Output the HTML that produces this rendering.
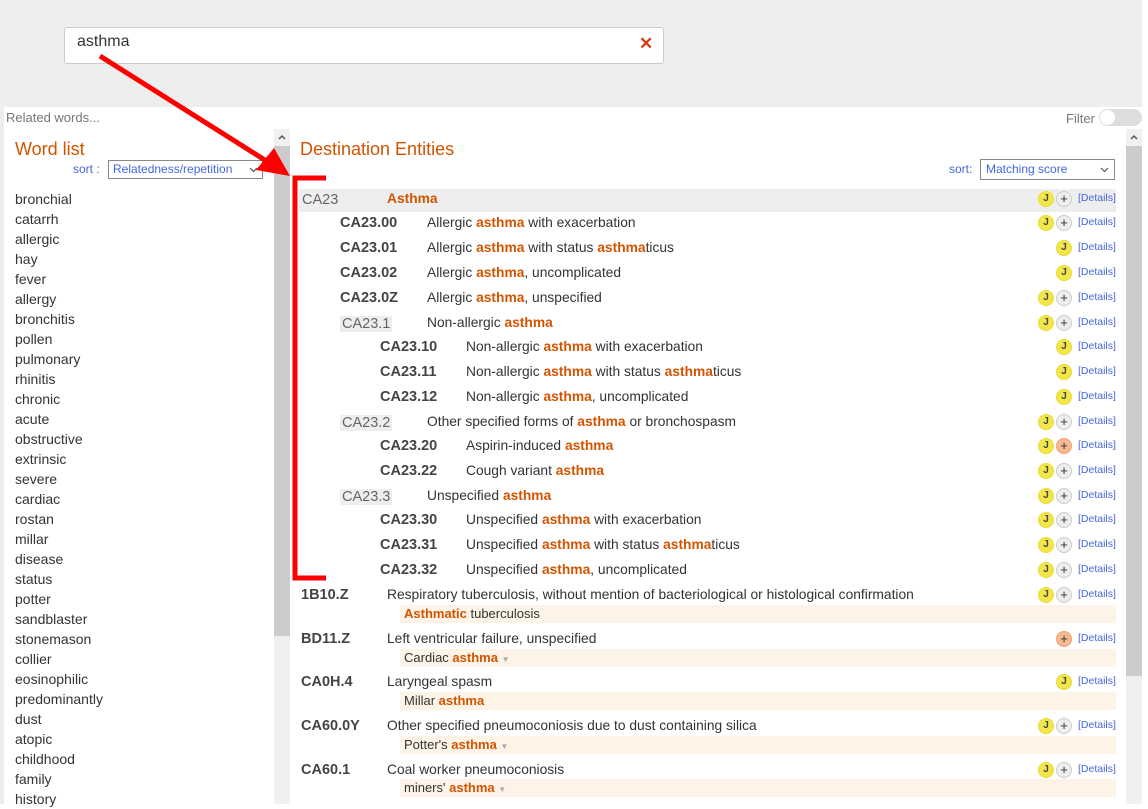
<!DOCTYPE html>
<html><head><meta charset="utf-8"><style>
*{margin:0;padding:0;box-sizing:border-box}
body{width:1148px;height:804px;overflow:hidden;background:#fff;font-family:"Liberation Sans",sans-serif;color:#333;position:relative}
.a{position:absolute;white-space:nowrap}
.top{left:0;top:0;width:1148px;height:107px;background:#eee}
.search{left:64px;top:27px;width:600px;height:37px;background:#fff;border:1px solid #ccc;border-radius:3px}
.wl{font-size:14px;left:15px;line-height:20px}
.r{height:20px;line-height:20px}
.code{font-weight:bold;color:#444;font-size:14.5px}
.cat{background:#eee;color:#666;padding:0 2px;font-size:14.5px}
.t{font-size:13.8px;color:#333}
b.o{color:#d35400}
.sub{background:#fdf3e6;height:18px;line-height:18px;left:400px;width:716px;padding-left:4px;font-size:13px}
.ic{width:16px;height:16px;border-radius:50%;font-size:10px;line-height:14px;text-align:center;font-weight:bold}
.j{background:#f2e64a;border:1px solid #e8dc30;color:#444}
.p{background:#eee;border:1px solid #ccc;color:#333;font-size:13px;font-weight:normal}
.po{background:#f7b993;border:1px solid #f0a070;color:#333;font-size:13px;font-weight:normal}
.d{font-size:10.5px;color:#4466dd;left:1078px}
.tri{color:#aaa;font-size:8px}
</style></head><body>
<div class="a top"></div>
<div class="a search"></div>
<div class="a" style="left:77px;top:33px;font-size:16px;color:#333">asthma</div>
<div class="a" style="left:639px;top:34px;font-size:17px;color:#d63c1c;font-weight:bold">✕</div>
<div class="a" style="left:0;top:107px;width:4px;height:697px;background:#eee"></div>
<div class="a" style="left:1142px;top:0;width:6px;height:804px;background:#fff"></div>
<div class="a" style="left:6px;top:110px;font-size:13px;color:#777">Related words...</div>
<div class="a" style="left:1066px;top:111px;font-size:13px;color:#777">Filter</div>
<div class="a" style="left:1099px;top:109px;width:43px;height:17px;border-radius:9px;background:#ddd"></div>
<div class="a" style="left:1100px;top:110px;width:15px;height:15px;border-radius:50%;background:#fff"></div>
<!-- scrollbars -->
<div class="a" style="left:274px;top:129px;width:16px;height:675px;background:#f0f0f0"></div>
<div class="a" style="left:274px;top:146px;width:16px;height:490px;background:#ccc"></div>
<svg class="a" style="left:278px;top:134px" width="8" height="6"><polyline points="1,5 4,2 7,5" fill="none" stroke="#555" stroke-width="1.5"/></svg>
<div class="a" style="left:1126px;top:129px;width:16px;height:675px;background:#f0f0f0"></div>
<div class="a" style="left:1126px;top:146px;width:16px;height:530px;background:#ccc"></div>
<svg class="a" style="left:1130px;top:134px" width="8" height="6"><polyline points="1,5 4,2 7,5" fill="none" stroke="#555" stroke-width="1.5"/></svg>
<!-- word list -->
<div class="a" style="left:15px;top:139px;font-size:18px;color:#d35400">Word list</div>
<div class="a" style="left:73px;top:162px;font-size:12px;color:#4466dd">sort :</div>
<div class="a" style="left:108px;top:160px;width:155px;height:19px;border:1px solid #888;font-size:12px;color:#4466dd;padding-left:4px;line-height:17px">Relatedness/repetition<svg style="position:absolute;right:4px;top:6px" width="9" height="6"><polyline points="1,1 4.5,4.5 8,1" fill="none" stroke="#555" stroke-width="1.2"/></svg></div>
<div class="a wl" style="top:189px">bronchial<br>catarrh<br>allergic<br>hay<br>fever<br>allergy<br>bronchitis<br>pollen<br>pulmonary<br>rhinitis<br>chronic<br>acute<br>obstructive<br>extrinsic<br>severe<br>cardiac<br>rostan<br>millar<br>disease<br>status<br>potter<br>sandblaster<br>stonemason<br>collier<br>eosinophilic<br>predominantly<br>dust<br>atopic<br>childhood<br>family<br>history</div>
<!-- dest -->
<div class="a" style="left:300px;top:139px;font-size:18px;color:#d35400">Destination Entities</div>
<div class="a" style="left:949px;top:162px;font-size:12px;color:#4466dd">sort:</div>
<div class="a" style="left:980px;top:159px;width:135px;height:21px;border:1px solid #888;font-size:12px;color:#4466dd;padding-left:5px;line-height:19px">Matching score<svg style="position:absolute;right:5px;top:7px" width="9" height="6"><polyline points="1,1 4.5,4.5 8,1" fill="none" stroke="#555" stroke-width="1.2"/></svg></div>
<div class="a" style="left:299px;top:189px;width:817px;height:23px;background:#eee"></div>

<div class="a r" style="top:190px;left:300px"><span class="cat" style="background:none">CA23</span></div>
<div class="a r t" style="top:189px;left:387px"><b class="o">Asthma</b></div>

<div class="a r code" style="top:213px;left:340px">CA23.00</div><div class="a r t" style="top:213px;left:427px">Allergic <b class="o">asthma</b> with exacerbation</div>
<div class="a r code" style="top:238px;left:340px">CA23.01</div><div class="a r t" style="top:238px;left:427px">Allergic <b class="o">asthma</b> with status <b class="o">asthma</b>ticus</div>
<div class="a r code" style="top:263px;left:340px">CA23.02</div><div class="a r t" style="top:263px;left:427px">Allergic <b class="o">asthma</b>, uncomplicated</div>
<div class="a r code" style="top:288px;left:340px">CA23.0Z</div><div class="a r t" style="top:288px;left:427px">Allergic <b class="o">asthma</b>, unspecified</div>
<div class="a r" style="top:314px;left:340px"><span class="cat">CA23.1</span></div><div class="a r t" style="top:313px;left:427px">Non-allergic <b class="o">asthma</b></div>
<div class="a r code" style="top:337px;left:380px">CA23.10</div><div class="a r t" style="top:337px;left:466px">Non-allergic <b class="o">asthma</b> with exacerbation</div>
<div class="a r code" style="top:362px;left:380px">CA23.11</div><div class="a r t" style="top:362px;left:466px">Non-allergic <b class="o">asthma</b> with status <b class="o">asthma</b>ticus</div>
<div class="a r code" style="top:387px;left:380px">CA23.12</div><div class="a r t" style="top:387px;left:466px">Non-allergic <b class="o">asthma</b>, uncomplicated</div>
<div class="a r" style="top:413px;left:340px"><span class="cat">CA23.2</span></div><div class="a r t" style="top:412px;left:427px">Other specified forms of <b class="o">asthma</b> or bronchospasm</div>
<div class="a r code" style="top:436px;left:380px">CA23.20</div><div class="a r t" style="top:436px;left:466px">Aspirin-induced <b class="o">asthma</b></div>
<div class="a r code" style="top:461px;left:380px">CA23.22</div><div class="a r t" style="top:461px;left:466px">Cough variant <b class="o">asthma</b></div>
<div class="a r" style="top:487px;left:340px"><span class="cat">CA23.3</span></div><div class="a r t" style="top:486px;left:427px">Unspecified <b class="o">asthma</b></div>
<div class="a r code" style="top:510px;left:380px">CA23.30</div><div class="a r t" style="top:510px;left:466px">Unspecified <b class="o">asthma</b> with exacerbation</div>
<div class="a r code" style="top:535px;left:380px">CA23.31</div><div class="a r t" style="top:535px;left:466px">Unspecified <b class="o">asthma</b> with status <b class="o">asthma</b>ticus</div>
<div class="a r code" style="top:560px;left:380px">CA23.32</div><div class="a r t" style="top:560px;left:466px">Unspecified <b class="o">asthma</b>, uncomplicated</div>

<div class="a r code" style="top:585px;left:301px">1B10.Z</div><div class="a r t" style="top:585px;left:387px">Respiratory tuberculosis, without mention of bacteriological or histological confirmation</div>
<div class="a sub" style="top:605px"><b class="o">Asthmatic</b> tuberculosis</div>
<div class="a r code" style="top:629px;left:301px">BD11.Z</div><div class="a r t" style="top:629px;left:387px">Left ventricular failure, unspecified</div>
<div class="a sub" style="top:649px">Cardiac <b class="o">asthma</b> <span class="tri">▼</span></div>
<div class="a r code" style="top:672px;left:301px">CA0H.4</div><div class="a r t" style="top:672px;left:387px">Laryngeal spasm</div>
<div class="a sub" style="top:692px">Millar <b class="o">asthma</b></div>
<div class="a r code" style="top:716px;left:301px">CA60.0Y</div><div class="a r t" style="top:716px;left:387px">Other specified pneumoconiosis due to dust containing silica</div>
<div class="a sub" style="top:736px">Potter's <b class="o">asthma</b> <span class="tri">▼</span></div>
<div class="a r code" style="top:760px;left:301px">CA60.1</div><div class="a r t" style="top:760px;left:387px">Coal worker pneumoconiosis</div>
<div class="a sub" style="top:779px">miners' <b class="o">asthma</b> <span class="tri">▼</span></div>

<div class="a ic j" style="left:1038px;top:191px">J</div><div class="a ic p" style="left:1056px;top:191px">+</div><div class="a d" style="top:192px">[Details]</div>
<div class="a ic j" style="left:1038px;top:215px">J</div><div class="a ic p" style="left:1056px;top:215px">+</div><div class="a d" style="top:216px">[Details]</div>
<div class="a ic j" style="left:1056px;top:240px">J</div><div class="a d" style="top:241px">[Details]</div>
<div class="a ic j" style="left:1056px;top:265px">J</div><div class="a d" style="top:266px">[Details]</div>
<div class="a ic j" style="left:1038px;top:290px">J</div><div class="a ic p" style="left:1056px;top:290px">+</div><div class="a d" style="top:291px">[Details]</div>
<div class="a ic j" style="left:1038px;top:315px">J</div><div class="a ic p" style="left:1056px;top:315px">+</div><div class="a d" style="top:316px">[Details]</div>
<div class="a ic j" style="left:1056px;top:339px">J</div><div class="a d" style="top:340px">[Details]</div>
<div class="a ic j" style="left:1056px;top:364px">J</div><div class="a d" style="top:365px">[Details]</div>
<div class="a ic j" style="left:1056px;top:389px">J</div><div class="a d" style="top:390px">[Details]</div>
<div class="a ic j" style="left:1038px;top:414px">J</div><div class="a ic p" style="left:1056px;top:414px">+</div><div class="a d" style="top:415px">[Details]</div>
<div class="a ic j" style="left:1038px;top:438px">J</div><div class="a ic po" style="left:1056px;top:438px">+</div><div class="a d" style="top:439px">[Details]</div>
<div class="a ic j" style="left:1038px;top:463px">J</div><div class="a ic p" style="left:1056px;top:463px">+</div><div class="a d" style="top:464px">[Details]</div>
<div class="a ic j" style="left:1038px;top:488px">J</div><div class="a ic p" style="left:1056px;top:488px">+</div><div class="a d" style="top:489px">[Details]</div>
<div class="a ic j" style="left:1038px;top:512px">J</div><div class="a ic p" style="left:1056px;top:512px">+</div><div class="a d" style="top:513px">[Details]</div>
<div class="a ic j" style="left:1038px;top:537px">J</div><div class="a ic p" style="left:1056px;top:537px">+</div><div class="a d" style="top:538px">[Details]</div>
<div class="a ic j" style="left:1038px;top:562px">J</div><div class="a ic p" style="left:1056px;top:562px">+</div><div class="a d" style="top:563px">[Details]</div>
<div class="a ic j" style="left:1038px;top:587px">J</div><div class="a ic p" style="left:1056px;top:587px">+</div><div class="a d" style="top:588px">[Details]</div>
<div class="a ic po" style="left:1056px;top:631px">+</div><div class="a d" style="top:632px">[Details]</div>
<div class="a ic j" style="left:1056px;top:674px">J</div><div class="a d" style="top:675px">[Details]</div>
<div class="a ic j" style="left:1038px;top:718px">J</div><div class="a ic p" style="left:1056px;top:718px">+</div><div class="a d" style="top:719px">[Details]</div>
<div class="a ic j" style="left:1038px;top:762px">J</div><div class="a ic p" style="left:1056px;top:762px">+</div><div class="a d" style="top:763px">[Details]</div>

<svg class="a" style="left:0;top:0" width="1148" height="804">
<line x1="100" y1="56" x2="268" y2="162" stroke="#f00" stroke-width="5"/>
<polygon points="290,176 256,170 274,148" fill="#f00"/>
<polyline points="326,178 295,178 295,578 326,578" fill="none" stroke="#f00" stroke-width="5"/>
</svg>
</body></html>
